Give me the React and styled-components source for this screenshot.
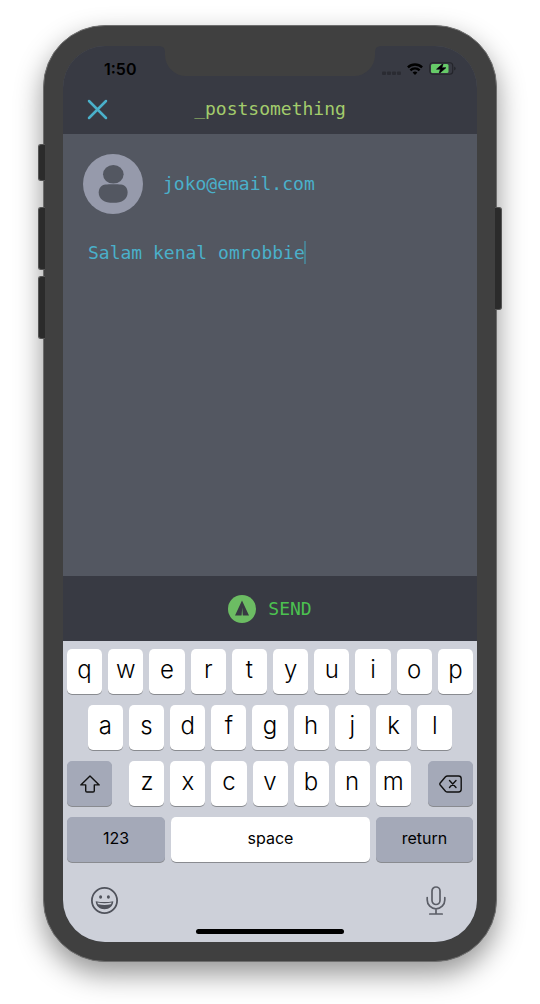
import React, { useState } from "react";
import styled, { createGlobalStyle, ThemeProvider } from "styled-components";

const theme = {
  bezel: "#404040",
  bar: "#383a43",
  page: "#535761",
  cyan: "#4ab0ca",
  lime: "#a3cc6c",
  green: "#4cc150",
  leaf: "#6cbc63",
  avatar: "#969aab",
  keyboard: "#cdd0d9",
  keyDark: "#a4a9b8",
  mono: '"DejaVu Sans Mono", "Liberation Mono", monospace',
  ui: 'Inter, "Liberation Sans", sans-serif',
};

const GlobalStyle = createGlobalStyle`
  *, *::before, *::after { box-sizing: border-box; }
  body { margin: 0; background: #fff; }
  button, textarea { margin: 0; padding: 0; border: 0; background: none; font: inherit; color: inherit; }
  button { cursor: pointer; }
  svg { display: block; }
`;

const Page = styled.div`
  display: flex;
  min-height: 100vh;
  padding: 25px 43px 42px;
`;

const Phone = styled.div`
  position: relative;
  display: flex;
  flex: 1;
  min-width: 0;
  padding: 20px 19px 19px;
  border: 1px solid #6e6e6e;
  border-radius: 62px;
  background: ${(p) => p.theme.bezel};
  box-shadow: 0 12px 28px rgba(0, 0, 0, 0.42);
`;

const SideButton = styled.span`
  position: absolute;
  top: ${(p) => p.$top}px;
  ${(p) => p.$side}: -6px;
  width: 7px;
  height: ${(p) => p.$length}px;
  border: 1px solid #555;
  border-${(p) => (p.$side === "left" ? "right" : "left")}: 0;
  border-radius: ${(p) => (p.$side === "left" ? "3px 0 0 3px" : "0 3px 3px 0")};
  background: #2b2b2b;
`;

const Screen = styled.div`
  position: relative;
  display: flex;
  flex: 1;
  flex-direction: column;
  min-width: 0;
  overflow: hidden;
  border-radius: 42px;
  background: ${(p) => p.theme.page};
`;

const NotchShape = styled.svg`
  position: absolute;
  top: 0;
  left: 50%;
  transform: translateX(-50%);
`;

const StatusBar = styled.div`
  display: flex;
  align-items: center;
  justify-content: space-between;
  height: 44px;
  padding: 1px 21px 0 41px;
  background: ${(p) => p.theme.bar};
  color: #000;
  font: 600 16px/20px ${(p) => p.theme.ui};
`;

const StatusIcons = styled.div`
  display: flex;
  align-items: center;
  gap: 6px;
`;

const Header = styled.header`
  display: grid;
  grid-template-columns: 1fr auto 1fr;
  align-items: center;
  height: 44px;
  padding: 0 24px 6px;
  background: ${(p) => p.theme.bar};
`;

const CloseButton = styled.button`
  justify-self: start;
`;

const Title = styled.h1`
  margin: 0;
  color: ${(p) => p.theme.lime};
  font: 400 18px/20px ${(p) => p.theme.mono};
`;

const Composer = styled.main`
  display: flex;
  flex: 1;
  flex-direction: column;
  gap: 27px;
  padding: 20px;
  color: ${(p) => p.theme.cyan};
  font: 400 18px/24px ${(p) => p.theme.mono};
`;

const Author = styled.div`
  display: flex;
  align-items: center;
  gap: 20px;
`;

const PostField = styled.label`
  display: flex;
  flex: 1;
  align-items: flex-start;
  padding: 0 5px;
  cursor: text;
`;

const PostInput = styled.textarea`
  display: block;
  max-width: 100%;
  field-sizing: content;
  resize: none;
  outline: 0;
  overflow: hidden;
  line-height: 24px;
  caret-color: transparent;
`;

const Caret = styled.span`
  width: 2px;
  height: 23px;
  margin-left: -1px;
  background: #4a8091;
`;

const SendBar = styled.div`
  display: flex;
  justify-content: center;
  background: ${(p) => p.theme.bar};
`;

const SendButton = styled.button`
  display: flex;
  align-items: center;
  justify-content: center;
  gap: 12px;
  height: 65px;
  color: ${(p) => p.theme.green};
  font: 400 18px/24px ${(p) => p.theme.mono};
`;

const Keyboard = styled.section`
  display: flex;
  flex-direction: column;
  gap: 11px;
  padding: 8px 4px;
  background: ${(p) => p.theme.keyboard};
  color: #000;
  font-family: ${(p) => p.theme.ui};
`;

const KeyRow = styled.div`
  display: flex;
  justify-content: ${(p) => (p.$spread ? "space-between" : "center")};
  gap: 6px;
`;

const LetterGroup = styled.div`
  display: flex;
  flex: 0 0 calc(70% - 3px);
  gap: 6px;
`;

const Key = styled.button`
  display: flex;
  align-items: center;
  justify-content: center;
  min-width: 0;
  height: 45px;
  border-radius: 5px;
  background: #fff;
  box-shadow: 0 1px 0 #898b90;
`;

const LetterKey = styled(Key)`
  flex: ${(p) => (p.$fill ? "1 1 0" : "0 0 calc((100% - 54px) / 10)")};
  padding-bottom: 4px;
  font-size: 24px;
  font-weight: 300;
  line-height: 30px;
`;

const IconKey = styled(Key)`
  flex: 0 0 45px;
  background: ${(p) => p.theme.keyDark};
`;

const WordKey = styled(Key)`
  flex: ${(p) => p.$grow} 1 0;
  padding-bottom: 3px;
  background: ${(p) => (p.$dark ? p.theme.keyDark : "#fff")};
  font-size: 16px;
  line-height: 20px;
`;

const KeyboardTools = styled.div`
  display: flex;
  align-items: center;
  justify-content: space-between;
  padding: 13px 27px 3px 24px;
`;

const HomeBar = styled.div`
  align-self: center;
  width: 148px;
  height: 5px;
  border-radius: 3px;
  background: #000;
`;

const Notch = () => (
  <NotchShape width="222" height="30" viewBox="0 0 222 30" aria-hidden="true">
    <path
      fill={theme.bezel}
      d="M0 0Q6 0 6 6V9A21 21 0 0 0 27 30H195A21 21 0 0 0 216 9V6Q216 0 222 0Z"
    />
  </NotchShape>
);

const SignalIcon = () => (
  <svg width="19" height="12" viewBox="0 0 19 12" fill="#2a2b32" aria-hidden="true">
    {[0, 5, 10, 15].map((x) => (
      <rect key={x} x={x} y="8.500" width="4" height="3.500" rx="1" />
    ))}
  </svg>
);

const WifiIcon = () => (
  <svg width="16" height="12" viewBox="0 0 16 12" fill="none" stroke="#000" strokeWidth="2.400" aria-hidden="true">
    <path d="M.9 4.400A10.200 10.200 0 0 1 15.100 4.400" />
    <path d="M3.400 7.300A6.500 6.500 0 0 1 12.600 7.300" />
    <path d="M8 12 5.600 9.600A3.400 3.400 0 0 1 10.400 9.600Z" fill="#000" stroke="none" />
  </svg>
);

const BatteryIcon = () => (
  <svg width="27" height="13" viewBox="0 0 27 13" aria-hidden="true">
    <rect x=".75" y=".75" width="23" height="11.500" rx="3" fill="none" stroke="#23242a" strokeWidth="1.100" />
    <path d="M25.200 4.500Q26.600 5.200 26.600 6.500T25.200 8.500Z" fill="#23242a" />
    <rect x="2" y="2" width="17.500" height="9" rx="1.500" fill="#66cb68" />
    <path
      d="M14.300 1.200 7.500 7.200H11.400L10 11.800 17 5.700H12.900Z"
      fill="#000"
      stroke={theme.bar}
      strokeWidth="1"
      paintOrder="stroke"
    />
  </svg>
);

const CloseIcon = () => (
  <svg width="21" height="21" viewBox="0 0 21 21" fill="none" stroke={theme.cyan} strokeWidth="2.500" strokeLinecap="round" aria-hidden="true">
    <path d="M2 2 19 19M19 2 2 19" />
  </svg>
);

const Avatar = () => (
  <svg width="60" height="60" viewBox="0 0 60 60" role="img" aria-label="Profile">
    <circle cx="30" cy="30" r="30" fill={theme.avatar} />
    <ellipse cx="30.300" cy="20.300" rx="10.300" ry="9.300" fill={theme.page} />
    <path
      d="M22.500 30.500C26 30.100 34.500 30.100 38 30.500C42 31 44.600 34 44.600 38.500C44.600 45.500 39 48.800 30.200 48.800S15.700 45.500 15.700 38.500C15.700 34 18.500 31 22.500 30.500Z"
      fill={theme.page}
    />
  </svg>
);

const SendIcon = () => (
  <svg width="28" height="28" viewBox="0 0 28 28" aria-hidden="true">
    <circle cx="14" cy="14" r="14" fill={theme.leaf} />
    <path d="M14 5.500 21 20.500H14.800L14.200 12.500 13.600 20.500H7Z" fill={theme.bar} />
  </svg>
);

const ShiftIcon = () => (
  <svg width="20" height="18" viewBox="0 0 20 18" fill="none" stroke="#111" strokeWidth="1.400" strokeLinejoin="round" aria-hidden="true">
    <path d="M10 .9 19.200 9.900H14.300V15.700Q14.300 17 13 17H7Q5.700 17 5.700 15.700V9.900H.8Z" />
  </svg>
);

const DeleteIcon = () => (
  <svg width="23" height="18" viewBox="0 0 23 18" fill="none" stroke="#111" strokeWidth="1.400" strokeLinejoin="round" strokeLinecap="round" aria-hidden="true">
    <path d="M8.500 1H19.500Q22.200 1 22.200 3.700V14.300Q22.200 17 19.500 17H8.500Q7.300 17 6.500 16.200L1.200 10Q.4 9 1.200 8L6.500 1.800Q7.300 1 8.500 1Z" />
    <path d="M10.500 5.500 17 12.500M17 5.500 10.500 12.500" />
  </svg>
);

const EmojiIcon = () => (
  <svg width="27" height="27" viewBox="0 0 27 27" aria-hidden="true">
    <circle cx="13.500" cy="13.500" r="12.600" fill="none" stroke="#50535c" strokeWidth="1.800" />
    <ellipse cx="9.600" cy="10" rx="1.500" ry="1.700" fill="#50535c" />
    <ellipse cx="17.400" cy="10" rx="1.500" ry="1.700" fill="#50535c" />
    <path d="M4.700 14.200Q13.500 16 22.300 14.200C22 19 18.500 22.200 13.500 22.200S5 19 4.700 14.200Z" fill="#50535c" />
    <path d="M6.300 15.600Q13.500 17 20.700 15.600 20.400 16.600 19.800 17.200 13.500 18.800 7.200 17.200 6.600 16.600 6.300 15.600Z" fill={theme.keyboard} />
  </svg>
);

const MicIcon = () => (
  <svg width="20" height="29" viewBox="0 0 20 29" fill="none" stroke="#5b5e67" strokeWidth="1.700" strokeLinecap="round" aria-hidden="true">
    <rect x="6" y="1" width="8" height="17.500" rx="4" />
    <path d="M1.200 11.500V14A8.800 8.800 0 0 0 18.800 14V11.500M10 22.800V28M3.800 28H16.200" />
  </svg>
);

const Letters = ({ text, fill }) =>
  [...text].map((letter) => (
    <LetterKey key={letter} type="button" $fill={fill}>
      {letter}
    </LetterKey>
  ));

export default function App() {
  const [post, setPost] = useState("Salam kenal omrobbie");

  return (
    <ThemeProvider theme={theme}>
      <GlobalStyle />
      <Page>
        <Phone>
          <SideButton $side="left" $top={118} $length={37} />
          <SideButton $side="left" $top={181} $length={63} />
          <SideButton $side="left" $top={250} $length={63} />
          <SideButton $side="right" $top={181} $length={103} />
          <Screen>
            <StatusBar>
              <span>1:50</span>
              <StatusIcons>
                <SignalIcon />
                <WifiIcon />
                <BatteryIcon />
              </StatusIcons>
            </StatusBar>
            <Notch />
            <Header>
              <CloseButton type="button" aria-label="Close">
                <CloseIcon />
              </CloseButton>
              <Title>_postsomething</Title>
            </Header>
            <Composer>
              <Author>
                <Avatar />
                <span>joko@email.com</span>
              </Author>
              <PostField>
                <PostInput
                  aria-label="Post"
                  rows={1}
                  spellCheck={false}
                  value={post}
                  onChange={(e) => setPost(e.target.value)}
                />
                <Caret />
              </PostField>
            </Composer>
            <SendBar>
              <SendButton type="button">
                <SendIcon />
                <span>SEND</span>
              </SendButton>
            </SendBar>
            <Keyboard aria-label="Keyboard">
              <KeyRow>
                <Letters text="qwertyuiop" fill />
              </KeyRow>
              <KeyRow>
                <Letters text="asdfghjkl" />
              </KeyRow>
              <KeyRow $spread>
                <IconKey type="button" aria-label="Shift">
                  <ShiftIcon />
                </IconKey>
                <LetterGroup>
                  <Letters text="zxcvbnm" fill />
                </LetterGroup>
                <IconKey type="button" aria-label="Delete">
                  <DeleteIcon />
                </IconKey>
              </KeyRow>
              <KeyRow>
                <WordKey type="button" $grow={98} $dark>
                  123
                </WordKey>
                <WordKey type="button" $grow={199}>
                  space
                </WordKey>
                <WordKey type="button" $grow={97} $dark>
                  return
                </WordKey>
              </KeyRow>
              <KeyboardTools>
                <button type="button" aria-label="Emoji">
                  <EmojiIcon />
                </button>
                <button type="button" aria-label="Dictate">
                  <MicIcon />
                </button>
              </KeyboardTools>
              <HomeBar />
            </Keyboard>
          </Screen>
        </Phone>
      </Page>
    </ThemeProvider>
  );
}
